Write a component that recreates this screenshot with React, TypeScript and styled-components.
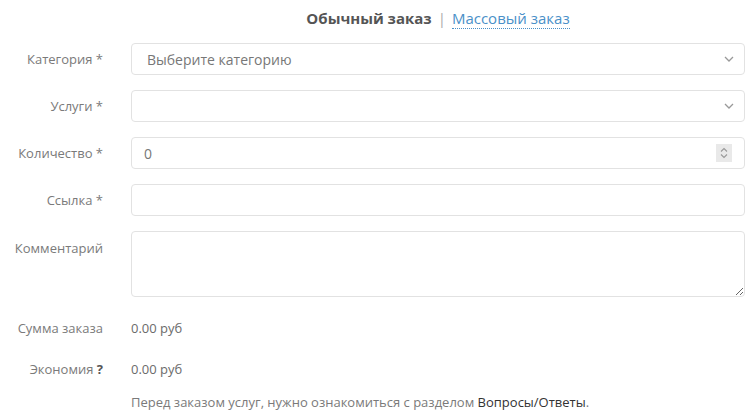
import React, { useState } from 'react';
import styled, { createGlobalStyle } from 'styled-components';

const GlobalStyle = createGlobalStyle`
  body {
    margin: 0;
    background: #fff;
    font-family: "Open Sans", "Liberation Sans", sans-serif;
  }
`;

const Page = styled.div`
  padding: 7px 5px 0 0;
`;

const Tabs = styled.div`
  margin-left: 131px;
  text-align: center;
  font-size: 15px;
  line-height: 22px;
  color: #999;
  margin-bottom: 14px;

  b {
    color: #555;
    font-weight: 700;
  }

  .sep {
    margin: 0 6px;
    color: #aaa;
  }
`;

const TabLink = styled.a`
  color: #4a90c8;
  text-decoration: none;
  border-bottom: 1px dotted #4a90c8;
  cursor: pointer;
`;

const Form = styled.div`
  display: grid;
  grid-template-columns: 103px 1fr;
  column-gap: 28px;
  row-gap: 15px;
`;

const Label = styled.label<{ $top?: boolean }>`
  text-align: right;
  font-size: 13px;
  line-height: 18px;
  color: #7a7a7a;
  padding-top: ${(p) => (p.$top ? '8px' : '0')};
  align-self: ${(p) => (p.$top ? 'start' : 'center')};

  b {
    color: #555;
  }
`;

const Box = styled.div`
  display: flex;
  align-items: center;
  height: 32px;
  box-sizing: border-box;
  border: 1px solid #e2e2e2;
  border-radius: 4px;
  background: #fff;
  padding: 0 8px 0 0;
`;

const Select = styled.select`
  flex: 1;
  height: 100%;
  border: none;
  outline: none;
  background: transparent;
  appearance: none;
  font-family: inherit;
  font-size: 14px;
  color: #777;
  padding: 0 15px;
`;

const TextInput = styled.input`
  flex: 1;
  min-width: 0;
  height: 100%;
  border: none;
  outline: none;
  background: transparent;
  font-family: inherit;
  font-size: 14px;
  color: #777;
  padding: 0 12px;
`;

const Spinner = styled.span`
  display: flex;
  align-items: center;
  justify-content: center;
  width: 16px;
  height: 18px;
  background: #e9e9e9;
  margin-right: 4px;
`;

const TextArea = styled.textarea`
  display: block;
  width: 100%;
  height: 66px;
  box-sizing: border-box;
  border: 1px solid #e2e2e2;
  border-radius: 4px;
  padding: 8px 12px;
  font-family: inherit;
  font-size: 14px;
  color: #666;
  outline: none;
`;

const Value = styled.div`
  font-size: 13px;
  line-height: 18px;
  color: #6b6b6b;
`;

const StaticRow = styled.div<{ $mt: number }>`
  display: grid;
  grid-template-columns: 103px 1fr;
  column-gap: 28px;
  margin-top: ${(p) => p.$mt}px;
  align-items: center;
`;

const Note = styled.div`
  font-size: 13px;
  line-height: 18px;
  color: #7a7a7a;

  a {
    color: #333;
    text-decoration: none;
  }
`;

const Chevron = () => (
  <svg width="10" height="6" viewBox="0 0 10 6" style={{ marginRight: 2 }}>
    <path d="M1 1l4 4 4-4" fill="none" stroke="#999" strokeWidth="1.3" />
  </svg>
);

const SpinIcon = () => (
  <svg width="8" height="12" viewBox="0 0 8 12">
    <path d="M1 4.5l3-3 3 3M1 7.5l3 3 3-3" fill="none" stroke="#999" strokeWidth="1.1" />
  </svg>
);

export default function App() {
  const [qty, setQty] = useState('0');
  const [link, setLink] = useState('');
  const [comment, setComment] = useState('');

  return (
    <Page>
      <GlobalStyle />
      <Tabs>
        <b>Обычный заказ</b>
        <span className="sep">|</span>
        <TabLink>Массовый заказ</TabLink>
      </Tabs>

      <Form>
        <Label>Категория *</Label>
        <Box>
          <Select defaultValue="">
            <option value="">Выберите категорию</option>
          </Select>
          <Chevron />
        </Box>

        <Label>Услуги *</Label>
        <Box>
          <Select defaultValue="">
            <option value=""></option>
          </Select>
          <Chevron />
        </Box>

        <Label>Количество *</Label>
        <Box>
          <TextInput value={qty} onChange={(e) => setQty(e.target.value)} />
          <Spinner>
            <SpinIcon />
          </Spinner>
        </Box>

        <Label>Ссылка *</Label>
        <Box>
          <TextInput value={link} onChange={(e) => setLink(e.target.value)} />
        </Box>

        <Label $top>Комментарий</Label>
        <TextArea value={comment} onChange={(e) => setComment(e.target.value)} />
      </Form>

      <StaticRow $mt={22}>
        <Label>Сумма заказа</Label>
        <Value>0.00 руб</Value>
      </StaticRow>

      <StaticRow $mt={23}>
        <Label>
          Экономия <b>?</b>
        </Label>
        <Value>0.00 руб</Value>
      </StaticRow>

      <StaticRow $mt={15}>
        <div />
        <Note>
          Перед заказом услуг, нужно ознакомиться с разделом <a>Вопросы/Ответы</a>.
        </Note>
      </StaticRow>
    </Page>
  );
}
